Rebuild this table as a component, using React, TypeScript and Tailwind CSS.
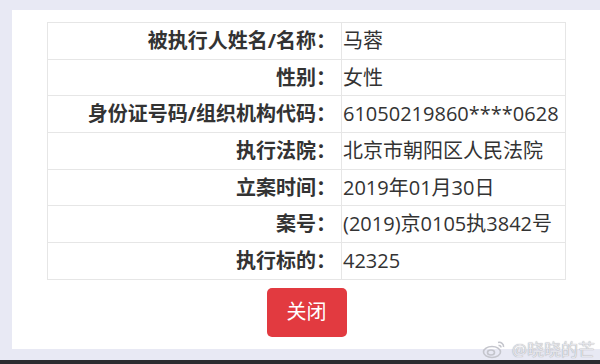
import React from 'react'

const rows = [
  { label: '被执行人姓名/名称：', value: '马蓉' },
  { label: '性别：', value: '女性' },
  { label: '身份证号码/组织机构代码：', value: '61050219860****0628' },
  { label: '执行法院：', value: '北京市朝阳区人民法院' },
  { label: '立案时间：', value: '2019年01月30日' },
  { label: '案号：', value: '(2019)京0105执3842号' },
  { label: '执行标的：', value: '42325' },
]

const WeiboMark = () => (
  <svg width="26" height="20" viewBox="0 0 26 20" fill="none" stroke="#c4c5cc" strokeWidth="1.6">
    <ellipse cx="10" cy="13" rx="8.5" ry="5.5" />
    <ellipse cx="9" cy="13.5" rx="3.5" ry="2.5" />
    <path d="M16 3.5c3 -0.8 6 1.5 5.5 4.5" />
    <path d="M16.5 6.5c1.5 -0.3 2.6 0.6 2.4 2" />
  </svg>
)

const App = () => {
  return (
    <div
      className="relative flex h-[364px] w-[600px] flex-col overflow-hidden bg-[#e8e9f4]"
      style={{ fontFamily: '"Open Sans", "Noto Sans CJK SC", sans-serif' }}
    >
      <div className="flex flex-1 flex-col pl-[12px] pt-[10px]">
        <div className="flex flex-1 flex-col items-start bg-white pl-[35px] pt-[12px]">
          <div className="flex w-[519px] flex-col">
            <table className="w-full border-collapse text-[20px] text-[#333]">
              <tbody>
                {rows.map((r) => (
                  <tr key={r.label} className="h-[36.7px]">
                    <td className="w-[294px] border border-[#e6e6e6] pr-[5px] text-right font-bold leading-none whitespace-nowrap">
                      {r.label}
                    </td>
                    <td className="border border-[#e6e6e6] pl-[1px] leading-none whitespace-nowrap">
                      {r.value}
                    </td>
                  </tr>
                ))}
              </tbody>
            </table>
            <div className="flex justify-center pt-[8px]">
              <button className="h-[49px] w-[80px] rounded-[5px] bg-[#e23a40] text-[20px] text-white">
                关闭
              </button>
            </div>
          </div>
        </div>
        <div className="h-[11px]" />
      </div>
      <div className="h-[4px] bg-[#2b2c30]" />

      <div className="absolute bottom-[2px] right-[5px] flex items-center gap-[4px] text-[17px] text-[#e4e5ea] [text-shadow:0_0_1px_#8d8e96]">
        <WeiboMark />
        <span>@晓晓的芒</span>
      </div>
    </div>
  )
}

export default App
